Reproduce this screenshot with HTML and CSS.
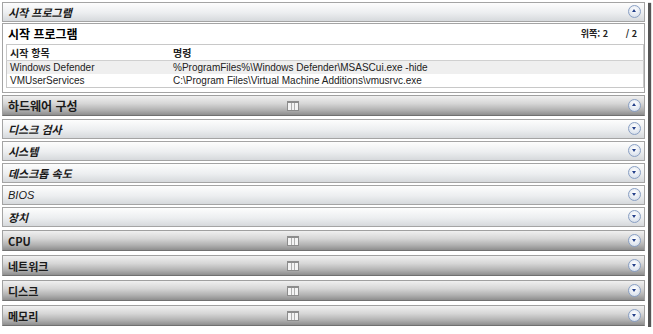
FILE: index.html
```html
<!DOCTYPE html>
<html lang="ko">
<head>
    <meta charset="UTF-8">
    <title>시스템 정보</title>
    <link rel="stylesheet" href="styles.css">
</head>
<body>
    <div class="frame">
        <!-- Startup programs (expanded) -->
        <div class="bar light first">
            <span class="bar-title">시작 프로그램</span>
            <span class="toggle up"></span>
        </div>
        <div class="panel">
            <div class="panel-head">
                <span class="panel-title">시작 프로그램</span>
                <span class="pager">위쪽: 2 <span class="pager-total">/ 2</span></span>
            </div>
            <table class="grid">
                <tr class="grid-head"><th class="col-name">시작 항목</th><th>명령</th></tr>
                <tr class="alt"><td>Windows Defender</td><td>%ProgramFiles%\Windows Defender\MSASCui.exe -hide</td></tr>
                <tr><td>VMUserServices</td><td>C:\Program Files\Virtual Machine Additions\vmusrvc.exe</td></tr>
            </table>
        </div>

        <div class="bar dark hw">
            <span class="bar-title big">하드웨어 구성</span>
            <span class="grid-icon"></span>
            <span class="toggle up"></span>
        </div>

        <div class="bar light"><span class="bar-title">디스크 검사</span><span class="toggle"></span></div>
        <div class="bar light"><span class="bar-title">시스템</span><span class="toggle"></span></div>
        <div class="bar light"><span class="bar-title">데스크톱 속도</span><span class="toggle"></span></div>
        <div class="bar light"><span class="bar-title thin">BIOS</span><span class="toggle"></span></div>
        <div class="bar light last-light"><span class="bar-title">장치</span><span class="toggle"></span></div>

        <div class="bar dark"><span class="bar-title">CPU</span><span class="grid-icon"></span><span class="toggle"></span></div>
        <div class="bar dark"><span class="bar-title">네트워크</span><span class="grid-icon"></span><span class="toggle"></span></div>
        <div class="bar dark"><span class="bar-title">디스크</span><span class="grid-icon"></span><span class="toggle"></span></div>
        <div class="bar dark"><span class="bar-title">메모리</span><span class="grid-icon"></span><span class="toggle"></span></div>
    </div>
</body>
</html>
```

FILE: styles.css
```css
body {
    margin: 0;
    background: #fff;
    font-family: "Liberation Sans", "Noto Sans CJK KR", sans-serif;
    color: #000;
}

.frame {
    width: 646px;
    height: 325px;
    padding: 2px 0 0 2px;
    display: flex;
    flex-direction: column;
    box-shadow: 3px 3px 1px #555;
    background: #fff;
}

/* Section header bars */
.bar {
    position: relative;
    display: flex;
    align-items: center;
    box-sizing: border-box;
    width: 643px;
    padding-left: 5px;
    border: 1px solid #a4a4a4;
    flex-shrink: 0;
}

.bar.light {
    height: 20px;
    margin-bottom: 2px;
    background: linear-gradient(#fdfdfd, #eceef0 55%, #d6d9dc);
}

.bar.first {
    margin-bottom: 1px;
}

.bar.last-light {
    margin-bottom: 3px;
}

.bar.dark {
    height: 21px;
    margin-bottom: 4px;
    border-color: #a0a0a0;
    border-bottom-color: #707070;
    background: linear-gradient(#f0f0f0, #d6d6d6 40%, #b0b0b0 75%, #8e8e8e);
}

.bar.hw {
    margin-bottom: 3px;
}

.bar-title {
    font-family: "Noto Sans CJK KR", "Liberation Sans", sans-serif;
    font-size: 11px;
    font-weight: bold;
    font-style: italic;
    color: #1a1a1a;
}

.bar.dark .bar-title {
    font-style: normal;
}

.bar-title.big {
    font-size: 12px;
}

.bar-title.thin {
    font-family: "Liberation Sans", sans-serif;
    font-weight: normal;
}

/* Expand / collapse circle */
.toggle {
    position: absolute;
    right: 3px;
    top: 50%;
    width: 11px;
    height: 11px;
    margin-top: -7px;
    border: 1.5px solid #8aa0c4;
    border-radius: 50%;
    background: radial-gradient(circle at 50% 35%, #ffffff, #dde4ee 70%, #c4cedc);
}

.toggle::after {
    content: "";
    position: absolute;
    left: 3px;
    top: 4px;
    border-left: 2.5px solid transparent;
    border-right: 2.5px solid transparent;
    border-top: 3px solid #24408a;
}

.toggle.up::after {
    top: 3px;
    border-top: none;
    border-bottom: 3px solid #24408a;
}

/* Small table icon in the middle of dark bars */
.grid-icon {
    position: absolute;
    left: 284px;
    top: 50%;
    width: 10px;
    height: 7px;
    margin-top: -5px;
    border: 1px solid #8c8c8c;
    border-top-width: 2px;
    background:
        linear-gradient(90deg, transparent 3px, #b0b0b0 3px, #b0b0b0 4px, transparent 4px, transparent 6px, #b0b0b0 6px, #b0b0b0 7px, transparent 7px),
        #f4f4f4;
}

/* Expanded panel */
.panel {
    box-sizing: border-box;
    width: 643px;
    height: 70px;
    margin-bottom: 2px;
    padding: 1px 3px 0 3px;
    border: 1px solid #a4a4a4;
    background: #fff;
    flex-shrink: 0;
}

.panel-head {
    display: flex;
    justify-content: space-between;
    align-items: center;
    height: 17px;
    padding: 0 4px 0 2px;
}

.panel-title {
    font-family: "Noto Sans CJK KR", sans-serif;
    font-size: 12px;
    font-weight: bold;
}

.pager {
    font-family: "Noto Sans CJK KR", "Liberation Sans", sans-serif;
    font-size: 9px;
    font-weight: bold;
    color: #222;
}

.pager-total {
    margin-left: 15px;
}

.grid {
    width: 638px;
    margin-top: 2px;
    border-collapse: collapse;
    border: 1px solid #c8c8c8;
    font-size: 10px;
    color: #222;
}

.grid th,
.grid td {
    text-align: left;
    padding: 0 0 0 3px;
    height: 13px;
    white-space: nowrap;
}

.grid th {
    font-family: "Noto Sans CJK KR", sans-serif;
    font-size: 10px;
    height: 14px;
    border-bottom: 1px solid #d0d0d0;
}

.col-name {
    width: 160px;
}

.grid tr.alt td {
    background: #efefef;
}
```
